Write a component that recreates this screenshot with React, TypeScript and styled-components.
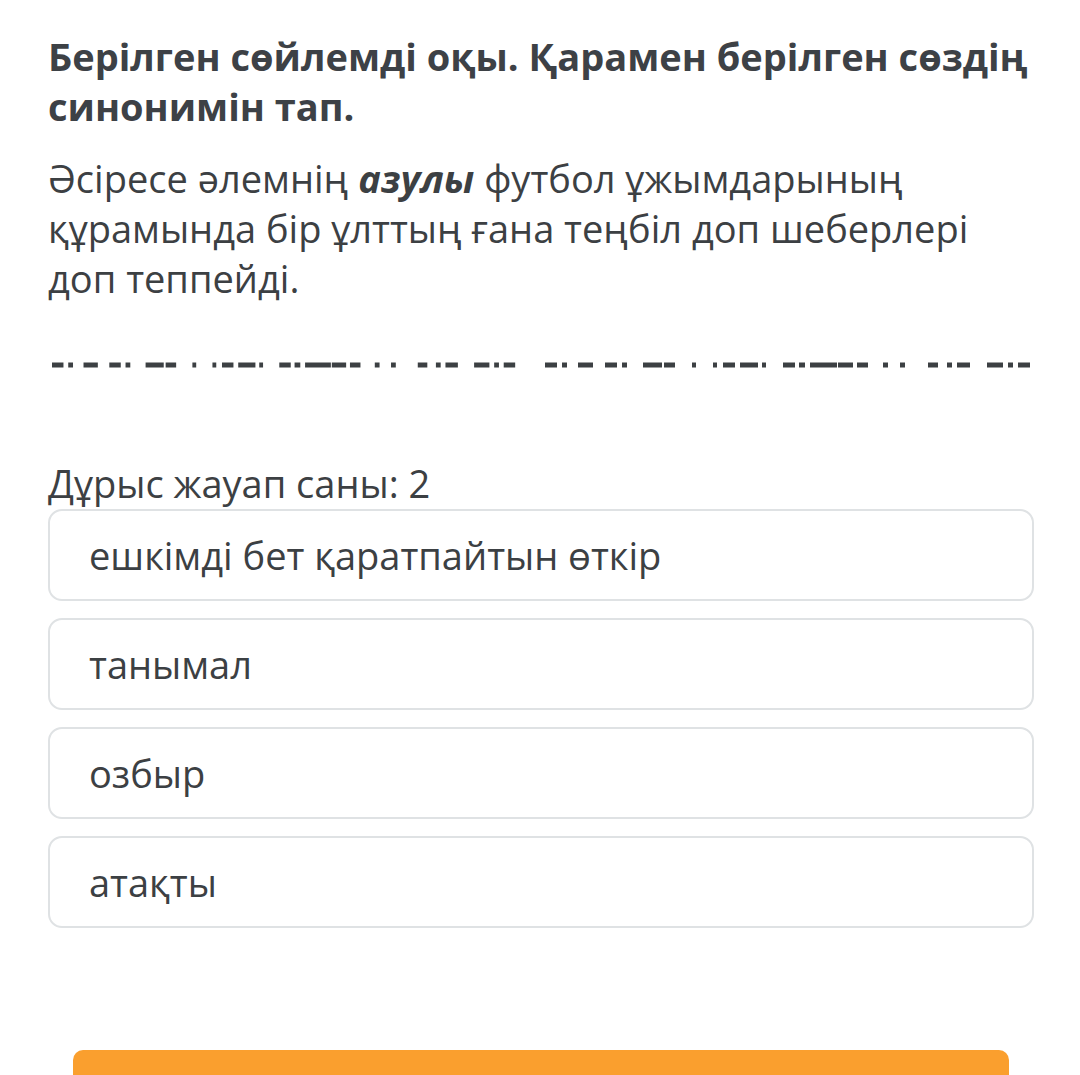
import React from 'react';
import styled, {createGlobalStyle} from 'styled-components';

const GlobalStyle = createGlobalStyle`
  html, body {
    margin: 0;
    padding: 0;
    background: #ffffff;
  }
  body {
    font-family: "Open Sans", "Noto Sans", sans-serif;
    color: #3c4043;
  }
`;

const Page = styled.div`
  width: 1080px;
  height: 1075px;
  overflow: hidden;
  box-sizing: border-box;
  padding: 31px 46px 0 48px;
`;

const Title = styled.h1`
  margin: 0;
  font-size: 38px;
  line-height: 50px;
  font-weight: 700;
  color: #3d4146;
`;

const Sentence = styled.p`
  margin: 22px 0 0;
  font-size: 38px;
  line-height: 50px;
  font-weight: 400;
  color: #3c4043;

  b {
    font-style: italic;
    font-weight: 700;
  }
`;

const Hidden = styled.svg`
  display: block;
  margin-top: 59px;
  width: 986px;
  height: 6px;
`;

const Label = styled.div`
  margin-top: 90px;
  font-size: 38px;
  line-height: 50px;
  color: #3c4043;
`;

const Options = styled.div`
  margin-top: 1px;
  display: grid;
  gap: 17px;
`;

const Option = styled.div`
  height: 92px;
  box-sizing: border-box;
  border: 2px solid #dfe2e4;
  border-radius: 14px;
  padding-left: 39px;
  display: flex;
  align-items: center;
  font-size: 38px;
  color: #3c4043;
`;

const Footer = styled.div`
  margin-top: 122px;
  padding: 0 25px;
`;

const SubmitButton = styled.button`
  display: block;
  width: 100%;
  height: 60px;
  border: none;
  border-radius: 10px;
  background: #fa9f2e;
`;

// blurred blank that hides the answer, drawn as small blocks
const blocks: [number, number][] = [
  [0, 12], [17, 5], [33, 15], [60, 12], [77, 5], [98, 19], [119, 11], [147, 4],
  [168, 4], [178, 12], [195, 18], [217, 4], [238, 12], [254, 6], [265, 27],
  [293, 15], [312, 11], [338, 5], [355, 5], [383, 10], [402, 5], [412, 13],
  [442, 16], [463, 5], [473, 12],
];

// the same blurred word twice, the first one a bit narrower
const copies = [
  {x: 4, scale: 0.955},
  {x: 497, scale: 1},
];

const HiddenAnswer = () => (
  <Hidden viewBox="0 0 986 6">
    {copies.map(c => (
      <g key={c.x} transform={`translate(${c.x} 0) scale(${c.scale} 1)`}>
        {blocks.map(([x, w], i) => (
          <rect key={i} x={x} y={0.5} width={w} height={5} fill="#3c4043"/>
        ))}
      </g>
    ))}
  </Hidden>
);

const answers = [
  'ешкімді бет қаратпайтын өткір',
  'танымал',
  'озбыр',
  'атақты',
];

export default function App() {
  return (
    <>
      <GlobalStyle/>
      <Page>
        <Title>Берілген сөйлемді оқы. Қарамен берілген сөздің синонимін тап.</Title>
        <Sentence>
          Әсіресе әлемнің <b>азулы</b> футбол ұжымдарының құрамында бір ұлттың ғана теңбіл доп шеберлері доп теппейді.
        </Sentence>
        <HiddenAnswer/>
        <Label>Дұрыс жауап саны: 2</Label>
        <Options>
          {answers.map(a => <Option key={a}>{a}</Option>)}
        </Options>
        <Footer>
          <SubmitButton/>
        </Footer>
      </Page>
    </>
  );
}
